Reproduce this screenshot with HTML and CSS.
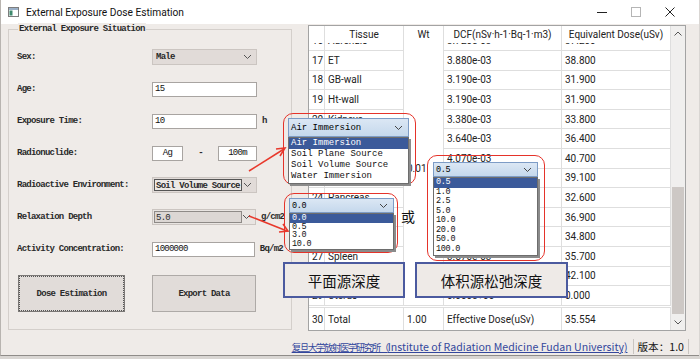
FILE: index.html
```html
<!DOCTYPE html>
<html>
<head>
    <title>External Exposure Dose Estimation</title>
    <link rel="stylesheet" href="styles.css">
</head>
<body>
    <div class="window">
        <div class="titlebar">
            <svg class="app-icon" width="11" height="10" viewBox="0 0 11 10">
                <rect x="0.5" y="0.5" width="10" height="9" fill="#fff" stroke="#7d7d7d"/>
                <rect x="1" y="1" width="9" height="2" fill="#9bb0c8"/>
                <rect x="1.5" y="3.5" width="3" height="5" fill="#3f8a6e"/>
            </svg>
            <span class="title">External Exposure Dose Estimation</span>
            <div class="controls">
                <span class="ctl">
                    <svg width="10" height="10" viewBox="0 0 10 10"><line x1="0" y1="5.5" x2="10" y2="5.5" stroke="#222"/></svg>
                </span>
                <span class="ctl">
                    <svg width="10" height="10" viewBox="0 0 10 10"><rect x="0.5" y="0.5" width="9" height="9" fill="none" stroke="#b5b5b5"/></svg>
                </span>
                <span class="ctl">
                    <svg width="10" height="10" viewBox="0 0 10 10"><path d="M0.5 0.5 L9.5 9.5 M9.5 0.5 L0.5 9.5" stroke="#222"/></svg>
                </span>
            </div>
        </div>

        <div class="main">
            <div class="group">
                <div class="group-title">External Exposure Situation</div>
                <div class="form">
                    <div class="row">
                        <span class="label">Sex:</span>
                        <div class="combo"><span>Male</span><svg class="chev" width="9" height="6" viewBox="0 0 9 6"><path d="M1 1 L4.5 4.5 L8 1" fill="none" stroke="#555"/></svg></div>
                    </div>
                    <div class="row">
                        <span class="label">Age:</span>
                        <div class="field">15</div>
                    </div>
                    <div class="row">
                        <span class="label">Exposure Time:</span>
                        <div class="field">10</div>
                        <span class="unit">h</span>
                    </div>
                    <div class="row">
                        <span class="label">Radionuclide:</span>
                        <div class="field small">Ag</div>
                        <span class="dash">-</span>
                        <div class="field mass">100m</div>
                    </div>
                    <div class="row">
                        <span class="label">Radioactive Environment:</span>
                        <div class="combo"><span class="inner focus">Soil Volume Source</span><svg class="chev" width="9" height="6" viewBox="0 0 9 6"><path d="M1 1 L4.5 4.5 L8 1" fill="none" stroke="#555"/></svg></div>
                    </div>
                    <div class="row">
                        <span class="label">Relaxation Depth</span>
                        <div class="combo light"><span class="inner">5.0</span><svg class="chev" width="9" height="6" viewBox="0 0 9 6"><path d="M1 1 L4.5 4.5 L8 1" fill="none" stroke="#555"/></svg></div>
                        <span class="unit">g/cm2</span>
                    </div>
                    <div class="row">
                        <span class="label">Activity Concentration:</span>
                        <div class="field">1000000</div>
                        <span class="unit">Bq/m2</span>
                    </div>
                </div>
                <div class="buttons">
                    <div class="btn primary">Dose Estimation</div>
                    <div class="btn export">Export Data</div>
                </div>
            </div>

            <div class="table">
                <div class="content">
                    <div class="head">
                        <div class="hc"></div>
                        <div class="hc">Tissue</div>
                        <div class="hc">Wt</div>
                        <div class="hc">DCF(nSv·h-1·Bq-1·m3)</div>
                        <div class="hc">Equivalent Dose(uSv)</div>
                    </div>
                    <div class="rows">
                        <div class="grid">
                            <div class="c wt">0.01</div>
                            <div class="c n">16</div><div class="c">Adrenals</div><div class="c">3.720e-03</div><div class="c">37.200</div>
                            <div class="c n">17</div><div class="c">ET</div><div class="c">3.880e-03</div><div class="c">38.800</div>
                            <div class="c n">18</div><div class="c">GB-wall</div><div class="c">3.190e-03</div><div class="c">31.900</div>
                            <div class="c n">19</div><div class="c">Ht-wall</div><div class="c">3.190e-03</div><div class="c">31.900</div>
                            <div class="c n">20</div><div class="c">Kidneys</div><div class="c">3.380e-03</div><div class="c">33.800</div>
                            <div class="c n">21</div><div class="c">Lymph</div><div class="c">3.640e-03</div><div class="c">36.400</div>
                            <div class="c n">22</div><div class="c">Muscle</div><div class="c">4.070e-03</div><div class="c">40.700</div>
                            <div class="c n">23</div><div class="c">O-mucosa</div><div class="c">3.910e-03</div><div class="c">39.100</div>
                            <div class="c n">24</div><div class="c">Pancreas</div><div class="c">3.260e-03</div><div class="c">32.600</div>
                            <div class="c n">25</div><div class="c">Prostate</div><div class="c">3.690e-03</div><div class="c">36.900</div>
                            <div class="c n">26</div><div class="c">SI-wall</div><div class="c">3.480e-03</div><div class="c">34.800</div>
                            <div class="c n">27</div><div class="c">Spleen</div><div class="c">3.570e-03</div><div class="c">35.700</div>
                            <div class="c n">28</div><div class="c">Thymus</div><div class="c">4.210e-03</div><div class="c">42.100</div>
                            <div class="c n">29</div><div class="c">Uterus</div><div class="c">0.000e+00</div><div class="c">0.000</div>
                        </div>
                    </div>
                    <div class="total">
                        <div class="c n">30</div><div class="c">Total</div><div class="c">1.00</div><div class="c">Effective Dose(uSv)</div><div class="c">35.554</div>
                    </div>
                </div>
                <div class="scrollbar">
                    <svg class="arr up" width="8" height="5" viewBox="0 0 8 5"><path d="M0.5 4.5 L4 1 L7.5 4.5" fill="none" stroke="#555"/></svg>
                    <div class="thumb"></div>
                    <svg class="arr down" width="8" height="5" viewBox="0 0 8 5"><path d="M0.5 0.5 L4 4 L7.5 0.5" fill="none" stroke="#555"/></svg>
                </div>
            </div>
        </div>

        <div class="status">
            <a class="link" href="#"><span class="cn">复旦大学放射医学研究所（</span>Institute of Radiation Medicine Fudan University)</a>
            <span class="version">版本：1.0</span>
        </div>
    </div>

    <!-- annotation layer drawn over the screenshot -->
    <div class="notes">
        <svg class="arrows" width="700" height="359" viewBox="0 0 700 359">
            <path d="M249 171 L284 149" stroke="#e8392c" stroke-width="1.6" fill="none"/>
            <path d="M276 149 L285 148 L280 156" stroke="#e8392c" stroke-width="1.6" fill="none"/>
            <path d="M249 216 L287 231" stroke="#e8392c" stroke-width="1.6" fill="none"/>
            <path d="M279 232 L288 231 L283 224" stroke="#e8392c" stroke-width="1.6" fill="none"/>
        </svg>

        <div class="frame env">
            <div class="pop-combo big"><span>Air Immersion</span><svg width="9" height="6" viewBox="0 0 9 6"><path d="M1 1 L4.5 4.5 L8 1" fill="none" stroke="#444"/></svg></div>
            <div class="pop-list big">
                <div class="item on">Air Immersion</div>
                <div class="item">Soil Plane Source</div>
                <div class="item">Soil Volume Source</div>
                <div class="item">Water Immersion</div>
            </div>
        </div>

        <div class="frame plane">
            <div class="pop-combo"><span>0.0</span><svg width="9" height="6" viewBox="0 0 9 6"><path d="M1 1 L4.5 4.5 L8 1" fill="none" stroke="#444"/></svg></div>
            <div class="pop-list">
                <div class="item on">0.0</div>
                <div class="item">0.5</div>
                <div class="item">3.0</div>
                <div class="item">10.0</div>
            </div>
        </div>

        <div class="frame volume">
            <div class="pop-combo"><span>0.5</span><svg width="9" height="6" viewBox="0 0 9 6"><path d="M1 1 L4.5 4.5 L8 1" fill="none" stroke="#444"/></svg></div>
            <div class="pop-list tall">
                <div class="item on">0.5</div>
                <div class="item">1.0</div>
                <div class="item">2.5</div>
                <div class="item">5.0</div>
                <div class="item">10.0</div>
                <div class="item">20.0</div>
                <div class="item">50.0</div>
                <div class="item">100.0</div>
            </div>
        </div>

        <span class="or">或</span>
        <div class="tag plane-tag">平面源深度</div>
        <div class="tag volume-tag">体积源松弛深度</div>
    </div>
</body>
</html>
```

FILE: styles.css
```css
body {
    margin: 0;
    width: 700px;
    height: 359px;
    overflow: hidden;
    position: relative;
    background-color: #d9d6d3;
    font-family: "Liberation Mono", monospace;
}
.window {
    width: 698px;
    height: 355px;
    background-color: #efebe8;
    border-left: 1px solid #b8b4b0;
    border-bottom: 1px solid #8f8c89;
    display: flex;
    flex-direction: column;
}

/* title bar */
.titlebar {
    height: 24px;
    background-color: #fff;
    display: flex;
    align-items: center;
    flex-shrink: 0;
}
.app-icon {
    margin-left: 7px;
}
.title {
    margin-left: 7px;
    font-family: Roboto, sans-serif;
    font-size: 10.2px;
    color: #111;
}
.controls {
    margin-left: auto;
    display: flex;
    padding-right: 12px;
}
.ctl {
    width: 34px;
    display: flex;
    justify-content: center;
}

.main {
    display: flex;
    height: 314px;
    flex-shrink: 0;
}

/* left group box */
.group {
    margin: 5px 0 0 7px;
    width: 284px;
    height: 301px;
    box-sizing: border-box;
    border: 1px solid #d4cfcb;
    padding: 0 8px;
    font-size: 9px;
    font-weight: bold;
    letter-spacing: -0.75px;
    line-height: 12px;
    color: #2a2a2a;
}
.group-title {
    margin: -7px 0 0 1px;
    padding: 0 1px;
    width: fit-content;
    height: 12px;
    background-color: #efebe8;
}
.form {
    padding-top: 6px;
}
.row {
    display: flex;
    align-items: center;
    height: 32px;
}
.label {
    width: 135px;
    flex-shrink: 0;
}
.field {
    width: 105px;
    height: 15px;
    box-sizing: border-box;
    background-color: #fff;
    border: 1px solid #a8a4a1;
    padding-left: 2px;
    display: flex;
    align-items: center;
    font-weight: normal;
    color: #111;
}
.field.small {
    width: 31px;
    justify-content: center;
    padding: 0;
}
.field.mass {
    width: 39px;
    justify-content: center;
    padding: 0;
}
.dash {
    width: 35px;
    text-align: center;
}
.unit {
    margin-left: 5px;
}
.combo {
    width: 105px;
    height: 16px;
    box-sizing: border-box;
    background-color: #e1dbd8;
    border: 1px solid #cbc5c1;
    display: flex;
    align-items: center;
    padding-left: 3px;
}
.combo.light {
    background-color: #e9e5e2;
}
.combo .inner {
    margin-left: -2px;
    width: 88px;
    height: 12px;
    box-sizing: border-box;
    border: 1px solid #8e8a87;
    padding-left: 1px;
    background-color: #dcd7d4;
    font-weight: normal;
}
.combo .inner.focus {
    background-color: #ece8e5;
    border-color: #555;
    font-weight: bold;
}
.chev {
    margin-left: auto;
    margin-right: 4px;
}

.buttons {
    display: flex;
    margin-top: 10px;
}
.btn {
    height: 37px;
    box-sizing: border-box;
    background-color: #e1dcd9;
    border: 1px solid #aeaaa7;
    display: flex;
    align-items: center;
    justify-content: center;
}
.btn.primary {
    width: 107px;
    margin-left: 1px;
    border-color: #7b7876;
    outline: 1px dotted #555;
    outline-offset: -2px;
}
.btn.export {
    width: 104px;
    margin-left: 27px;
}

/* results table */
.table {
    margin: 1px 0 0 16px;
    width: 378px;
    height: 306px;
    box-sizing: border-box;
    border: 1px solid #a3a3a3;
    background-color: #fff;
    font-family: Roboto, sans-serif;
    font-size: 10px;
    color: #222;
    display: flex;
}
.content {
    width: 362px;
    display: flex;
    flex-direction: column;
}
.head {
    display: grid;
    grid-template-columns: 16px 79px 40px 118px 109px;
    height: 17px;
    flex-shrink: 0;
}
.hc {
    border-right: 1px solid #dedede;
    text-align: center;
    line-height: 17px;
}
.rows {
    height: 264px;
    overflow: hidden;
    flex-shrink: 0;
}
.grid {
    margin-top: -11.6px;
    display: grid;
    grid-template-columns: 16px 79px 40px 118px 109px;
    grid-auto-rows: 19.6px;
}
.c {
    border-right: 1px solid #dedede;
    border-bottom: 1px solid #dedede;
    padding-left: 3px;
    display: flex;
    align-items: center;
    white-space: nowrap;
    overflow: hidden;
}
.c.wt {
    grid-column: 3;
    grid-row: 1 / span 14;
}
.total {
    display: grid;
    grid-template-columns: 16px 79px 40px 118px 109px;
    height: 23px;
    border-top: 1px solid #dedede;
    box-sizing: border-box;
}
.total .c {
    border-bottom: none;
}
.scrollbar {
    width: 14px;
    background-color: #f0efee;
    display: flex;
    flex-direction: column;
    align-items: center;
}
.arr.up {
    margin-top: 5px;
}
.thumb {
    margin-top: 151px;
    width: 12px;
    height: 127px;
    background-color: #cdc8c5;
}
.arr.down {
    margin-top: 6px;
}

/* status bar */
.status {
    flex: 1;
    display: flex;
    justify-content: flex-end;
    align-items: center;
    padding-right: 10px;
    font-family: "Noto Sans CJK SC", sans-serif;
    font-size: 10.6px;
}
.link {
    color: #34479c;
}
.link .cn {
    font-size: 9.5px;
    letter-spacing: -1.5px;
}
.version {
    margin-left: 5px;
    padding: 0 4px;
    border-left: 1px solid #c9c5c1;
    border-right: 1px solid #c9c5c1;
    color: #111;
}

/* annotations */
.notes {
    position: absolute;
    left: 0;
    top: 0;
    width: 700px;
    height: 359px;
}
.arrows {
    position: absolute;
    left: 0;
    top: 0;
}
.frame {
    position: absolute;
    border: 1.5px solid #e5332a;
    border-radius: 10px;
    box-sizing: border-box;
    padding: 4px 0 0 4px;
}
.frame.env {
    left: 283px;
    top: 113px;
    width: 133px;
    height: 72px;
}
.frame.plane {
    left: 284px;
    top: 193px;
    width: 114px;
    height: 60px;
}
.frame.volume {
    left: 427px;
    top: 155px;
    width: 118px;
    height: 106px;
    padding-left: 5px;
    padding-top: 6px;
}
.pop-combo {
    width: 105px;
    height: 15px;
    box-sizing: border-box;
    background: linear-gradient(#dbe7f4, #c5d8ec);
    border: 1px solid #7d9cc6;
    display: flex;
    align-items: center;
    justify-content: space-between;
    padding: 0 5px 0 2px;
    font-size: 8.5px;
    letter-spacing: -0.3px;
}
.pop-combo.big {
    width: 121px;
    height: 19px;
    font-size: 9px;
    letter-spacing: 0;
}
.pop-list {
    width: 105px;
    box-sizing: border-box;
    background-color: #fff;
    border: 1px solid #6d6d6d;
    box-shadow: 2px 2px 0 #8b8b8b;
    font-size: 8.5px;
    letter-spacing: -0.3px;
    line-height: 8.6px;
    padding-bottom: 1px;
}
.pop-list.big {
    width: 121px;
    font-size: 9px;
    letter-spacing: 0;
    line-height: 11px;
}
.pop-list.tall {
    line-height: 9.5px;
}
.item {
    padding-left: 2px;
    color: #111;
}
.item.on {
    background-color: #3b5a9a;
    color: #fff;
}
.or {
    position: absolute;
    left: 401px;
    top: 206px;
    font-family: "Noto Sans CJK SC", sans-serif;
    font-size: 14px;
    color: #111;
}
.tag {
    position: absolute;
    top: 262px;
    height: 36px;
    box-sizing: border-box;
    border: 2px solid #4b5a9f;
    background-color: #eeeae7;
    font-family: "Noto Sans CJK SC", sans-serif;
    font-size: 14.5px;
    color: #111;
    display: flex;
    align-items: center;
    justify-content: center;
}
.plane-tag {
    left: 283px;
    width: 122px;
}
.volume-tag {
    left: 415px;
    width: 153px;
}
```
